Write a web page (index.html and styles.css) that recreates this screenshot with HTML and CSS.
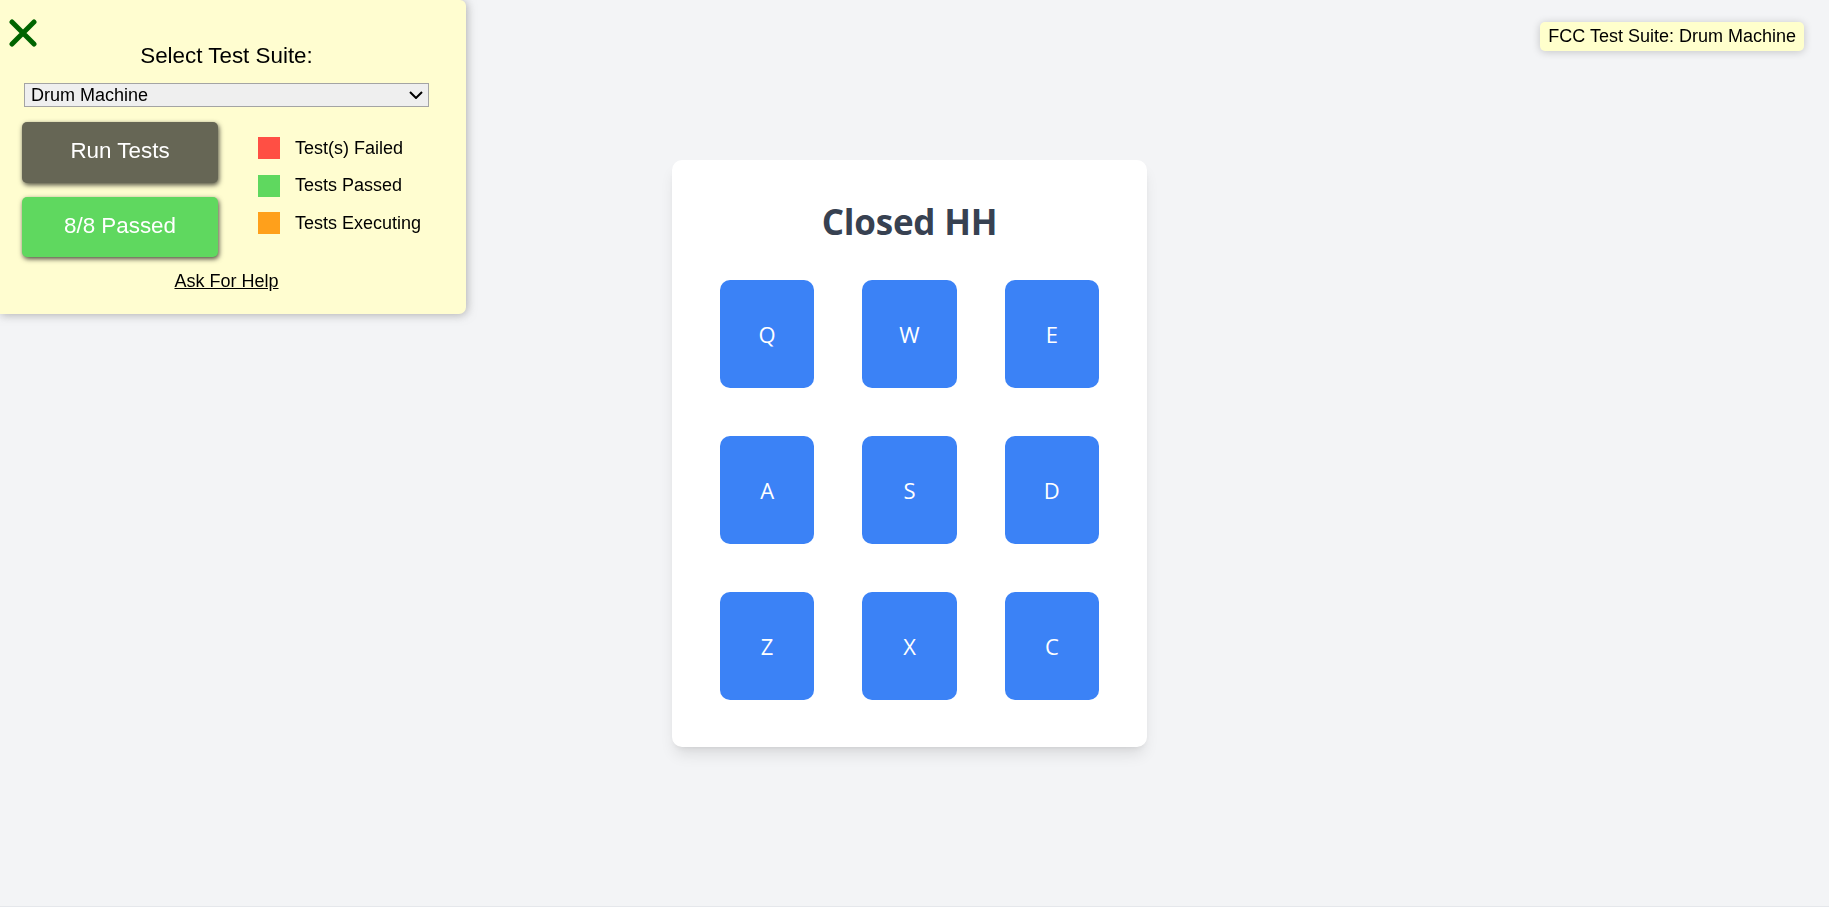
FILE: index.html
```html
<!DOCTYPE html>
<html lang="en">
<head>
<meta charset="utf-8">
<title>Drum Machine</title>
<link rel="stylesheet" href="styles.css">
</head>
<body>
<main class="stage">
  <section class="drum-card" id="drum-machine">
    <h1 class="drum-title" id="display">Closed HH</h1>
    <div class="pad-grid">
      <button class="drum-pad">Q</button>
      <button class="drum-pad">W</button>
      <button class="drum-pad">E</button>
      <button class="drum-pad">A</button>
      <button class="drum-pad">S</button>
      <button class="drum-pad">D</button>
      <button class="drum-pad">Z</button>
      <button class="drum-pad">X</button>
      <button class="drum-pad">C</button>
    </div>
  </section>
</main>

<aside class="fcc-panel">
  <svg class="fcc-close" width="28" height="28" viewBox="0 0 28 28" aria-hidden="true">
    <path d="M3 3 L25 25 M25 3 L3 25" stroke="#006400" stroke-width="5" stroke-linecap="round" fill="none"/>
  </svg>
  <div class="fcc-inner">
    <div class="fcc-title">Select Test Suite:</div>
    <div class="fcc-select">
      <span class="fcc-select-text">Drum Machine</span>
      <svg class="fcc-chevron" width="14" height="8" viewBox="0 0 14 8" aria-hidden="true">
        <path d="M1 1 L7 7 L13 1" stroke="#000" stroke-width="2" fill="none"/>
      </svg>
    </div>
    <div class="fcc-row">
      <div class="fcc-buttons">
        <button class="fcc-btn fcc-run">Run Tests</button>
        <button class="fcc-btn fcc-passed">8/8 Passed</button>
      </div>
      <ul class="fcc-legend">
        <li class="fcc-legend-item"><span class="fcc-swatch fcc-red"></span>Test(s) Failed</li>
        <li class="fcc-legend-item"><span class="fcc-swatch fcc-green"></span>Tests Passed</li>
        <li class="fcc-legend-item"><span class="fcc-swatch fcc-orange"></span>Tests Executing</li>
      </ul>
    </div>
    <a class="fcc-help" href="#">Ask For Help</a>
  </div>
</aside>

<div class="fcc-badge">FCC Test Suite: Drum Machine</div>
</body>
</html>
```

FILE: styles.css
```css
* {
  box-sizing: border-box;
}

html {
  background: #e5e7eb;
}

body {
  margin: 0;
  background: #f3f4f6;
  font-family: "Open Sans", "Noto Sans", sans-serif;
}

.stage {
  height: 906px;
  display: flex;
  align-items: center;
  justify-content: center;
  padding-right: 10px;
}

.drum-card {
  width: 475px;
  background: #ffffff;
  border-radius: 10px;
  padding: 42px 48px 47px;
  box-shadow: 0 10px 15px -3px rgba(0, 0, 0, 0.1), 0 4px 6px -4px rgba(0, 0, 0, 0.1);
}

.drum-title {
  margin: 0 0 38px;
  text-align: center;
  font-size: 35px;
  line-height: 40px;
  font-weight: 700;
  letter-spacing: -0.2px;
  color: #374151;
}

.pad-grid {
  display: grid;
  grid-template-columns: repeat(3, 1fr);
  column-gap: 48px;
  row-gap: 48px;
}

.drum-pad {
  height: 108px;
  border: none;
  border-radius: 10px;
  background: #3b82f6;
  color: #ffffff;
  font-family: "Open Sans", "Noto Sans", sans-serif;
  font-size: 22px;
  padding: 0;
}

/* FCC test panel */
.fcc-panel {
  position: fixed;
  top: 0;
  left: 0;
  width: 466px;
  height: 314px;
  background: #fffdd0;
  border-radius: 0 6px 7px 0;
  box-shadow: 1px 1px 10px rgba(128, 128, 128, 0.6);
  font-family: "Liberation Sans", Arial, sans-serif;
  color: #000;
  padding-left: 24px;
}

.fcc-close {
  position: absolute;
  left: 9px;
  top: 19px;
}

.fcc-inner {
  width: 405px;
  padding-top: 43px;
  display: flex;
  flex-direction: column;
}

.fcc-title {
  text-align: center;
  font-size: 22.4px;
  line-height: 26px;
}

.fcc-select {
  margin-top: 14px;
  height: 24px;
  border: 1px solid #a4a4a4;
  background: #efefef;
  display: flex;
  align-items: center;
  justify-content: space-between;
  padding: 0 5px 0 6px;
  font-size: 18px;
  line-height: 22px;
}

.fcc-row {
  margin-top: 15px;
  display: flex;
}

.fcc-buttons {
  margin-left: -2px;
  display: flex;
  flex-direction: column;
  gap: 14px;
}

.fcc-btn {
  width: 196px;
  border: none;
  border-radius: 5px;
  color: #ffffff;
  font-family: "Liberation Sans", Arial, sans-serif;
  font-size: 22.4px;
  padding: 0 0 3px;
  box-shadow: 1px 2px 5px rgba(0, 0, 0, 0.7);
}

.fcc-run {
  height: 61px;
  background: #666655;
}

.fcc-passed {
  height: 60px;
  background: #5fd85f;
}

.fcc-legend {
  list-style: none;
  margin: 0 0 0 40px;
  padding: 15px 0 0;
  display: flex;
  flex-direction: column;
  gap: 15.5px;
}

.fcc-legend-item {
  height: 22px;
  display: flex;
  align-items: center;
  gap: 15px;
  font-size: 18px;
}

.fcc-swatch {
  width: 22px;
  height: 22px;
  display: inline-block;
}

.fcc-red { background: #ff4f44; }
.fcc-green { background: #5fd85f; }
.fcc-orange { background: #ffa01b; }

.fcc-help {
  margin-top: 14px;
  align-self: center;
  color: #000;
  font-size: 18px;
  line-height: 20px;
  text-decoration: underline;
}

.fcc-badge {
  position: fixed;
  top: 22px;
  right: 25px;
  height: 29px;
  line-height: 29px;
  padding: 0 8px;
  background: #ffffcc;
  border-radius: 5px;
  box-shadow: 0 1px 8px rgba(0, 0, 0, 0.2);
  font-family: "Liberation Sans", Arial, sans-serif;
  font-size: 18px;
  color: #000;
}
```
